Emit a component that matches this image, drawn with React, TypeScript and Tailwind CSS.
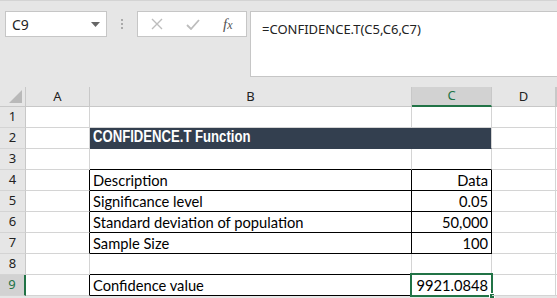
import React from "react";

const G = "border-[#d4d4d4]";
const cellFont = { fontFamily: "Lato, 'Liberation Sans', sans-serif" };

type Cell = { text?: string; cls?: string; txt?: string };

function RowHeader({ n, sel }: { n: number; sel?: boolean }) {
  return (
    <div
      className={`w-[26px] shrink-0 h-full border-b border-r ${
        sel ? "bg-[#d2d2d2] border-r-2 border-r-[#217346] text-[#217346]" : "bg-[#e6e6e6] text-[#222]"
      } border-b-[#d4d4d4] ${sel ? "" : "border-r-[#c8c8c8]"} flex items-center justify-center text-[13px]`}
      style={{ fontFamily: "'Noto Sans', sans-serif" }}
    >
      {n}
    </div>
  );
}

export default function App() {
  const widths = ["w-[64px]", "w-[322px]", "w-[80px]", "w-[64px]", "flex-1"];
  const rows: { n: number; cells: Cell[]; sel?: boolean }[] = [
    { n: 1, cells: [{}, {}, {}, {}, {}] },
    {
      n: 2,
      cells: [
        {},
        { text: "CONFIDENCE.T Function", cls: "bg-[#333f4f] border-r-[#333f4f] border-b-[#333f4f] text-white font-bold text-[16px]", txt: "title" },
        { cls: "bg-[#333f4f] border-b-[#333f4f]" },
        {},
        {},
      ],
    },
    { n: 3, cells: [{}, { cls: "border-b-black" }, { cls: "border-b-black" }, {}, {}] },
    {
      n: 4,
      cells: [
        { cls: "border-r-black" },
        { text: "Description", cls: "border-r-black border-b-black" },
        { text: "Data", cls: "border-r-black border-b-black justify-end" },
        {},
        {},
      ],
    },
    {
      n: 5,
      cells: [
        { cls: "border-r-black" },
        { text: "Significance level", cls: "border-r-black border-b-black" },
        { text: "0.05", cls: "border-r-black border-b-black justify-end" },
        {},
        {},
      ],
    },
    {
      n: 6,
      cells: [
        { cls: "border-r-black" },
        { text: "Standard deviation of population", cls: "border-r-black border-b-black" },
        { text: "50,000", cls: "border-r-black border-b-black justify-end" },
        {},
        {},
      ],
    },
    {
      n: 7,
      cells: [
        { cls: "border-r-black" },
        { text: "Sample Size", cls: "border-r-black border-b-black" },
        { text: "100", cls: "border-r-black border-b-black justify-end" },
        {},
        {},
      ],
    },
    { n: 8, cells: [{}, { cls: "border-b-black" }, { cls: "border-b-black" }, {}, {}] },
    {
      n: 9,
      sel: true,
      cells: [
        { cls: "border-r-black" },
        { text: "Confidence value", cls: "border-r-black border-b-black" },
        { text: "9921.0848", cls: "border-r-black border-b-black justify-end", txt: "sel" },
        {},
        {},
      ],
    },
  ];

  return (
    <div className="w-[557px] h-[298px] overflow-hidden bg-[#e6e6e6] relative">
      {/* Top formula area */}
      <div className="h-[87px] border-t border-[#d4d4d4] pt-[10px] flex items-start">
        <div className="ml-[5px] w-[102px] h-[26px] bg-white border border-[#c6c6c6] flex items-center justify-between pl-[6px] pr-[6px]">
          <span className="text-[14px] text-[#222]" style={{ fontFamily: "'Noto Sans', sans-serif" }}>
            C9
          </span>
          <svg width="9" height="5" viewBox="0 0 9 5">
            <path d="M0 0 L9 0 L4.5 5 Z" fill="#666" />
          </svg>
        </div>
        <div className="w-[30px] h-[26px] flex flex-col items-center justify-center gap-[2px]">
          <div className="w-[2px] h-[2px] bg-[#aaa]" />
          <div className="w-[2px] h-[2px] bg-[#aaa]" />
          <div className="w-[2px] h-[2px] bg-[#aaa]" />
        </div>
        <div className="w-[110px] h-[26px] bg-white border border-[#c6c6c6] flex items-center">
          <svg className="ml-[13px]" width="12" height="12" viewBox="0 0 12 12">
            <path d="M1 1 L11 11 M11 1 L1 11" stroke="#bdbdbd" strokeWidth="1.4" />
          </svg>
          <svg className="ml-[23px]" width="14" height="11" viewBox="0 0 14 11">
            <path d="M1 6 L5 10 L13 1" stroke="#bdbdbd" strokeWidth="1.8" fill="none" />
          </svg>
          <span
            className="ml-[23px] text-[15px] italic text-[#555]"
            style={{ fontFamily: "'Liberation Serif', serif" }}
          >
            f<span className="text-[12px]">x</span>
          </span>
        </div>
        <div className="ml-[3px] flex-1 h-[66px] bg-white border border-r-0 border-[#c6c6c6] pl-[11px] pt-[4px]">
          <span className="text-[13px] text-[#222]" style={{ fontFamily: "'Noto Sans', sans-serif" }}>
            =CONFIDENCE.T(C5,C6,C7)
          </span>
        </div>
      </div>

      {/* Column headers */}
      <div className="h-[20px] flex bg-[#e6e6e6]" style={{ fontFamily: "'Noto Sans', sans-serif" }}>
        <div className="w-[26px] shrink-0 h-full border-r border-b border-[#c8c8c8] relative">
          <svg className="absolute right-[3px] bottom-[3px]" width="13" height="13" viewBox="0 0 13 13">
            <path d="M13 0 L13 13 L0 13 Z" fill="#b9b9b9" />
          </svg>
        </div>
        {["A", "B", "C", "D", ""].map((c, i) => (
          <div
            key={i}
            className={`${widths[i]} shrink-0 h-full border-r flex items-center justify-center text-[13px] ${
              c === "C"
                ? "bg-[#d2d2d2] text-[#217346] border-b-2 border-b-[#217346] border-r-[#c8c8c8]"
                : "border-b border-[#c8c8c8] text-[#222]"
            }`}
          >
            {c}
          </div>
        ))}
      </div>

      {/* Rows */}
      {rows.map((r) => (
        <div key={r.n} className="h-[21px] flex bg-white">
          <RowHeader n={r.n} sel={r.sel} />
          {r.cells.map((c, i) => (
            <div
              key={i}
              className={`${widths[i]} shrink-0 h-full border-r border-b ${G} flex items-end pb-[1px] px-[3px] text-[15px] text-black relative ${
                c.cls ?? ""
              }`}
              style={
                c.txt === "title"
                  ? { fontFamily: "'Liberation Sans', Arial, sans-serif" }
                  : { ...cellFont, fontSize: c.text ? "14.7px" : undefined }
              }
            >
              <span
                className={
                  c.txt === "title"
                    ? "leading-[20px] inline-block whitespace-nowrap origin-left scale-x-[0.82]"
                    : "leading-[18px]"
                }
              >
                {c.text}
              </span>
              {c.txt === "sel" && (
                <>
                  <div className="absolute left-[-2px] top-[-2px] right-[-2px] bottom-[-2px] border-2 border-[#217346] pointer-events-none" />
                  <div className="absolute right-[-4px] bottom-[-4px] w-[6px] h-[6px] bg-[#217346] border border-white" />
                </>
              )}
            </div>
          ))}
        </div>
      ))}
    </div>
  );
}
